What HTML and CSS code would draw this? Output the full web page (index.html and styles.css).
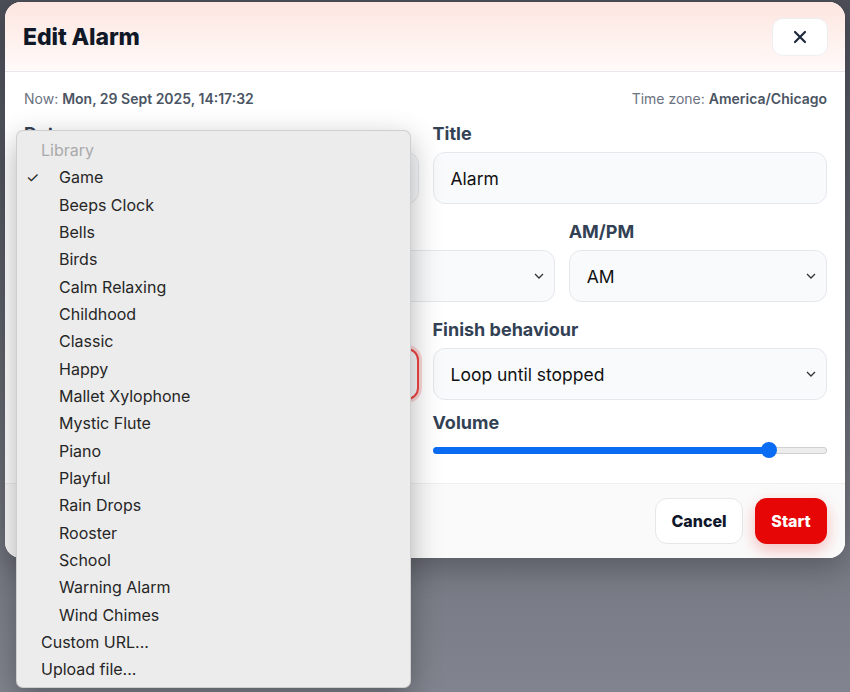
FILE: index.html
```html
<!DOCTYPE html>
<html lang="en">
<head>
    <meta charset="UTF-8">
    <meta name="viewport" content="width=device-width, initial-scale=1.0">
    <title>Edit Alarm</title>
    <link rel="stylesheet" href="styles.css">
</head>
<body>
    <div class="overlay">
        <div class="modal">
            <div class="modal-header">
                <h2>Edit Alarm</h2>
                <button class="close-btn" aria-label="Close">
                    <svg width="14" height="14" viewBox="0 0 14 14"><path d="M2 2L12 12M12 2L2 12" stroke="#1e293b" stroke-width="2.2" stroke-linecap="round"/></svg>
                </button>
            </div>

            <div class="modal-body">
                <div class="meta">
                    <span>Now: <b>Mon, 29 Sept 2025, 14:17:32</b></span>
                    <span>Time zone: <b>America/Chicago</b></span>
                </div>

                <div class="row two">
                    <div class="field">
                        <label>Date</label>
                        <div class="input"></div>
                    </div>
                    <div class="field">
                        <label>Title</label>
                        <div class="input">Alarm</div>
                    </div>
                </div>

                <div class="row three">
                    <div class="field">
                        <label>Hour</label>
                        <div class="input select"><span></span><svg class="chev" width="10" height="6" viewBox="0 0 10 6"><path d="M1 1L5 5L9 1" fill="none" stroke="#333" stroke-width="1.3"/></svg></div>
                    </div>
                    <div class="field">
                        <label>Minute</label>
                        <div class="input select"><span></span><svg class="chev" width="10" height="6" viewBox="0 0 10 6"><path d="M1 1L5 5L9 1" fill="none" stroke="#333" stroke-width="1.3"/></svg></div>
                    </div>
                    <div class="field">
                        <label>AM/PM</label>
                        <div class="input select"><span>AM</span><svg class="chev" width="10" height="6" viewBox="0 0 10 6"><path d="M1 1L5 5L9 1" fill="none" stroke="#333" stroke-width="1.3"/></svg></div>
                    </div>
                </div>

                <div class="row two">
                    <div class="field">
                        <label>Sound</label>
                        <div class="input select focused"><span></span><svg class="chev" width="10" height="6" viewBox="0 0 10 6"><path d="M1 1L5 5L9 1" fill="none" stroke="#333" stroke-width="1.3"/></svg></div>
                    </div>
                    <div class="field">
                        <label>Finish behaviour</label>
                        <div class="input select"><span>Loop until stopped</span><svg class="chev" width="10" height="6" viewBox="0 0 10 6"><path d="M1 1L5 5L9 1" fill="none" stroke="#333" stroke-width="1.3"/></svg></div>
                    </div>
                </div>

                <div class="row two last">
                    <div class="field"></div>
                    <div class="field">
                        <label>Volume</label>
                        <div class="slider">
                            <div class="slider-fill" style="width: 85.3%"></div>
                            <div class="slider-thumb"></div>
                            <div class="slider-rest"></div>
                        </div>
                    </div>
                </div>
            </div>

            <div class="modal-footer">
                <button class="cancel-btn">Cancel</button>
                <button class="start-btn">Start</button>
            </div>
        </div>

        <!-- open native select popup for the Sound field -->
        <div class="menu">
            <div class="menu-group">Library</div>
            <div class="menu-item checked"><span class="check">✓</span>Game</div>
            <div class="menu-item">Beeps Clock</div>
            <div class="menu-item">Bells</div>
            <div class="menu-item">Birds</div>
            <div class="menu-item">Calm Relaxing</div>
            <div class="menu-item">Childhood</div>
            <div class="menu-item">Classic</div>
            <div class="menu-item">Happy</div>
            <div class="menu-item">Mallet Xylophone</div>
            <div class="menu-item">Mystic Flute</div>
            <div class="menu-item">Piano</div>
            <div class="menu-item">Playful</div>
            <div class="menu-item">Rain Drops</div>
            <div class="menu-item">Rooster</div>
            <div class="menu-item">School</div>
            <div class="menu-item">Warning Alarm</div>
            <div class="menu-item">Wind Chimes</div>
            <div class="menu-group plain">Custom URL...</div>
            <div class="menu-group plain">Upload file...</div>
        </div>
    </div>
</body>
</html>
```

FILE: styles.css
```css
* {
    box-sizing: border-box;
}
body {
    margin: 0;
    font-family: Inter, "Noto Sans", sans-serif;
    background: linear-gradient(#4c4e58, #81848e);
    height: 692px;
    overflow: hidden;
}
.overlay {
    position: relative;
    padding: 2px 5px;
}
.modal {
    width: 840px;
    background: white;
    border-radius: 16px;
    overflow: hidden;
    box-shadow: 0 10px 30px rgba(0, 0, 0, 0.25);
}
.modal-header {
    height: 70px;
    display: flex;
    align-items: center;
    justify-content: space-between;
    padding: 0 17px 0 18px;
    background: linear-gradient(#fde6e0, #fffaf9);
    border-bottom: 1px solid #e6e8ec;
}
.modal-header h2 {
    margin: 0;
    font-size: 23px;
    font-weight: 800;
    color: #111827;
    letter-spacing: -0.1px;
}
.close-btn {
    width: 56px;
    height: 38px;
    background: white;
    border: 1px solid #eceef1;
    border-radius: 11px;
    display: flex;
    align-items: center;
    justify-content: center;
    margin-top: 1px;
}
.modal-body {
    padding: 19px 18px 25px 19px;
}
.meta {
    display: flex;
    justify-content: space-between;
    font-size: 14px;
    line-height: 16px;
    color: #6b7280;
    margin-bottom: 16px;
}
.meta b {
    font-weight: 600;
    color: #4b5563;
}
.row {
    display: grid;
    gap: 14px;
    margin-bottom: 17px;
}
.row.two {
    grid-template-columns: 1fr 1fr;
}
.row.three {
    grid-template-columns: 1fr 1fr 1fr;
}
.row.last {
    margin-bottom: 0;
    margin-top: -5px;
}
.field label {
    display: block;
    font-size: 18px;
    line-height: 22px;
    font-weight: 700;
    color: #334155;
    margin-bottom: 7px;
}
.input {
    height: 52px;
    display: flex;
    align-items: center;
    justify-content: space-between;
    padding: 0 10px 0 17px;
    background: #f8fafc;
    border: 1px solid #e5e7eb;
    border-radius: 12px;
    font-size: 17.5px;
    color: #111;
}
.focused {
    border: 2px solid #ef4444;
    box-shadow: 0 0 0 3px rgba(239, 68, 68, 0.22);
}
.slider {
    display: flex;
    align-items: center;
    height: 16px;
    margin-top: 8px;
}
.slider-fill {
    height: 7px;
    background: #0a6cf2;
    border-radius: 4px 0 0 4px;
}
.slider-thumb {
    width: 16px;
    height: 16px;
    border-radius: 50%;
    background: #0a6cf2;
    margin: 0 -8px;
    position: relative;
    z-index: 1;
    flex-shrink: 0;
}
.slider-rest {
    flex: 1;
    height: 7px;
    background: #ececec;
    border: 1px solid #d0d0d0;
    border-left: none;
    border-radius: 0 4px 4px 0;
}
.modal-footer {
    height: 75px;
    display: flex;
    justify-content: flex-end;
    align-items: center;
    gap: 12px;
    padding: 0 18px;
    background: #fafafa;
    border-top: 1px solid #eeeeee;
}
.cancel-btn, .start-btn {
    height: 46px;
    border-radius: 12px;
    font-family: Inter, sans-serif;
    font-size: 16px;
    font-weight: 800;
}
.cancel-btn {
    width: 88px;
    background: white;
    color: #0f172a;
    border: 1px solid #e5e7eb;
}
.start-btn {
    width: 72px;
    background: #e60606;
    color: white;
    border: none;
    box-shadow: 0 6px 16px rgba(230, 6, 6, 0.25);
}
.menu {
    position: absolute;
    left: 16px;
    top: 130px;
    width: 395px;
    height: 558px;
    padding-top: 6px;
    background: #ececec;
    border: 1px solid rgba(0, 0, 0, 0.12);
    border-radius: 7px;
    box-shadow: 0 10px 30px rgba(0, 0, 0, 0.3);
    font-size: 16px;
    color: #262626;
}
.menu-group, .menu-item {
    height: 27.33px;
    line-height: 27.33px;
}
.menu-group {
    padding-left: 24px;
    color: #a9a9a9;
}
.menu-group.plain {
    color: #262626;
}
.menu-item {
    padding-left: 42px;
    position: relative;
}
.check {
    position: absolute;
    left: 9px;
    font-size: 15px;
}
```
